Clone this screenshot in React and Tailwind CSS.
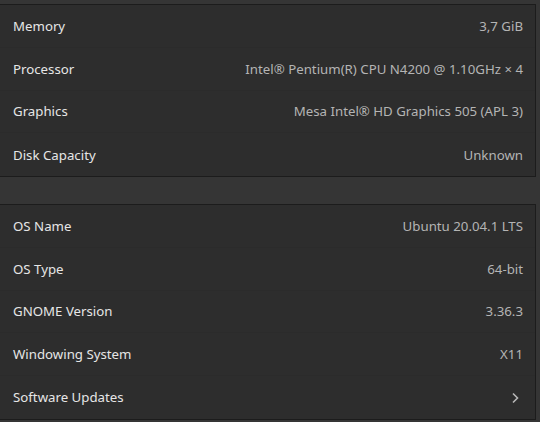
import React from "react";

const hardware = [
  { label: "Memory", value: "3,7 GiB" },
  { label: "Processor", value: "Intel® Pentium(R) CPU N4200 @ 1.10GHz × 4" },
  { label: "Graphics", value: "Mesa Intel® HD Graphics 505 (APL 3)" },
  { label: "Disk Capacity", value: "Unknown" },
];

const software = [
  { label: "OS Name", value: "Ubuntu 20.04.1 LTS" },
  { label: "OS Type", value: "64-bit" },
  { label: "GNOME Version", value: "3.36.3" },
  { label: "Windowing System", value: "X11" },
  { label: "Software Updates", arrow: true },
];

const Row = ({ item, last }) => (
  <div
    className={`flex items-center justify-between h-[42.75px] pl-[13px] pr-[12px] pt-[2px] ${
      last ? "" : "border-b border-[#2b2b2b]"
    }`}
  >
    <span className="text-[#e6e6e6]">{item.label}</span>
    {item.arrow ? (
      <svg width="8" height="12" viewBox="0 0 8 12" className="mr-[4px]">
        <path
          d="M2 1.5 L6.5 6 L2 10.5"
          fill="none"
          stroke="#b8b8b8"
          strokeWidth="1.6"
        />
      </svg>
    ) : (
      <span className="text-[#b4b4b4]">{item.value}</span>
    )}
  </div>
);

const Card = ({ items }) => (
  <div className="bg-[#2d2d2d] border-y border-r border-[#1c1c1c] mr-[4px]">
    {items.map((item, i) => (
      <Row key={item.label} item={item} last={i === items.length - 1} />
    ))}
  </div>
);

export default function App() {
  return (
    <div
      className="w-[540px] h-[422px] bg-[#353535] pt-[4px] overflow-hidden text-[13.25px]"
      style={{ fontFamily: '"Noto Sans", "Open Sans", sans-serif' }}
    >
      <Card items={hardware} />
      <div className="h-[27px]" />
      <Card items={software} />
    </div>
  );
}
